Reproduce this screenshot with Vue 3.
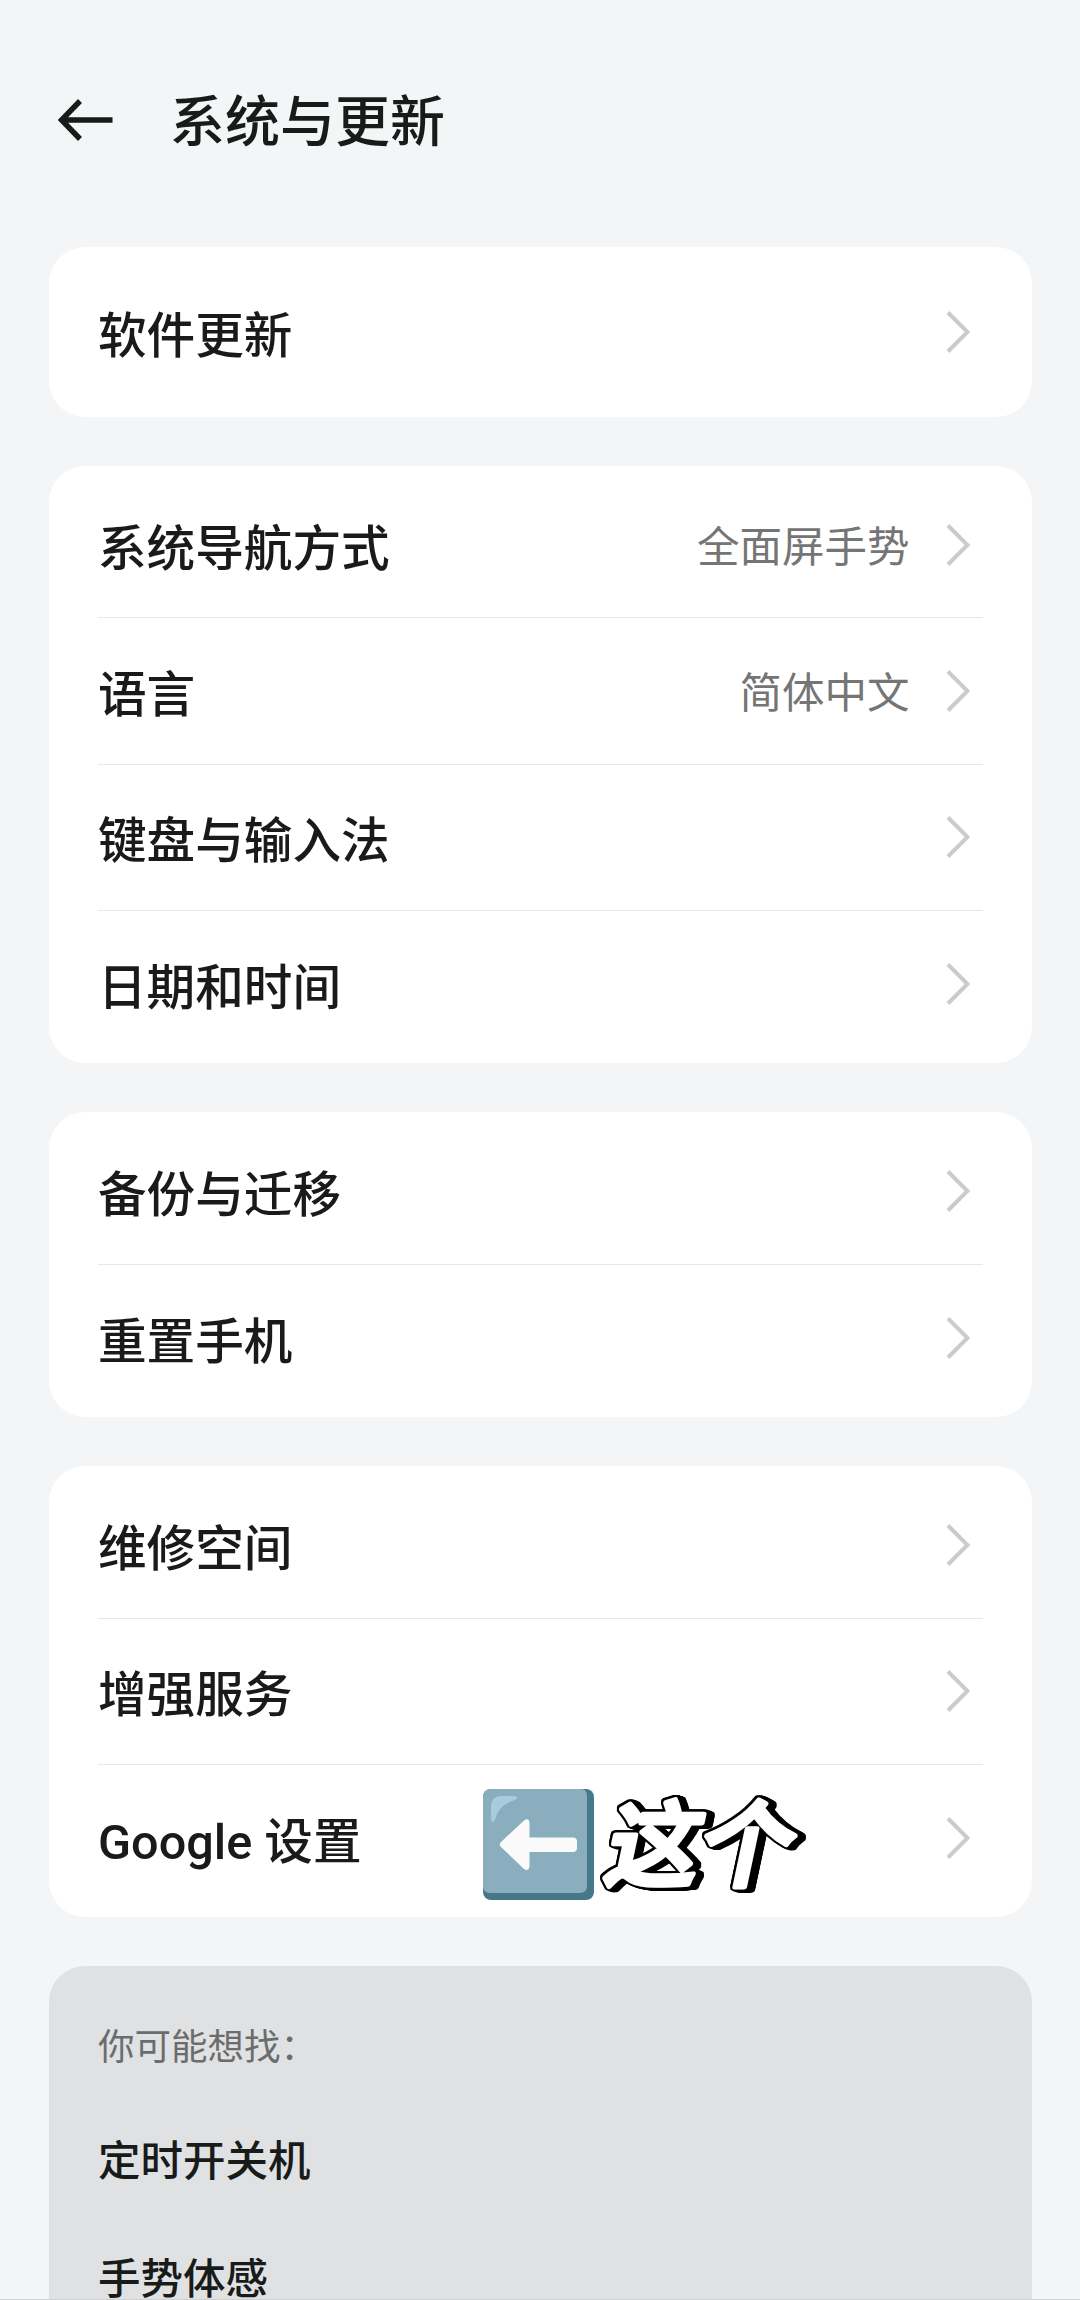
<script setup>
/**
 * 系统与更新 - 设置页
 */

const title = '系统与更新';

/** 设置分组，每组渲染为一张卡片 */
const groups = [
  [{ label: '软件更新' }],
  [
    { label: '系统导航方式', value: '全面屏手势' },
    { label: '语言', value: '简体中文' },
    { label: '键盘与输入法' },
    { label: '日期和时间' }
  ],
  [{ label: '备份与迁移' }, { label: '重置手机' }],
  [
    { label: '维修空间' },
    { label: '增强服务' },
    { label: 'Google 设置', note: '这个' }
  ]
];

const suggestions = ['定时开关机', '手势体感'];
</script>

<template>
  <div class="page">
    <header class="header">
      <svg class="back" width="56" height="44" viewBox="0 0 56 44">
        <path d="M22 3 3.500 22 22 41M4 22H54.500" />
      </svg>
      <h1 class="title">{{ title }}</h1>
    </header>

    <main class="groups">
      <section
        v-for="(group, i) in groups"
        :key="i"
        class="card"
        :class="{ single: group.length === 1 }"
      >
        <div v-for="item in group" :key="item.label" class="row">
          <span class="label">{{ item.label }}</span>
          <span v-if="item.value" class="value">{{ item.value }}</span>
          <svg class="chevron" width="24" height="44" viewBox="0 0 24 44">
            <path d="M2 2.5 21.5 22 2 41.5" />
          </svg>

          <!-- 浮在行上的标注 -->
          <div v-if="item.note" class="note">
            <svg width="111" height="111" viewBox="0 0 111 111">
              <rect width="111" height="111" rx="8" fill="#47788a" />
              <path d="M8 0H98Q104 0 104 7V97Q104 104 97 104H7Q0 104 0 97V8Q0 0 8 0Z" fill="#8aaebe" />
              <path d="M8 30V18Q8 7 19 7H31Q37 8 32 11C20 15 15 20 12 31Q9 36 8 30Z" fill="#a5cddf" />
              <path
                d="M18 53 41 31.500Q46 28 46.500 34V48.500H90Q94 48.500 94 52.500V59Q94 63 90 63H46.500V77Q46 83 41 80L18 58Q15.500 55.500 18 53Z"
                fill="#fafafa"
              />
            </svg>
            <svg class="note-text" width="230" height="111" viewBox="0 0 230 111">
              <text transform="translate(8 90) skewX(-12)">{{ item.note }}</text>
            </svg>
          </div>
        </div>
      </section>

      <section class="suggest">
        <p class="suggest-title">你可能想找：</p>
        <p v-for="s in suggestions" :key="s" class="suggest-item">{{ s }}</p>
      </section>
    </main>
  </div>
</template>

<style>
body {
  margin: 0;
  background: #f3f5f7;
}
</style>

<style scoped>
.page {
  display: flex;
  flex-direction: column;
  box-sizing: border-box;
  width: 1080px;
  height: 2300px;
  overflow: hidden;
  border-bottom: 1px solid #cfd0d0;
  background: #f3f5f7;
  color: #191a1a;
  font-family: Roboto, "Noto Sans CJK SC", sans-serif;
}

/* ======================== 顶栏 ======================== */

.header {
  display: flex;
  flex: none;
  align-items: center;
  gap: 56px;
  box-sizing: border-box;
  height: 240px;
  padding: 0 58px;
}

.back {
  fill: none;
  stroke: #191a1a;
  stroke-width: 5.5px;
}

.title {
  margin: 0;
  padding-top: 3px;
  font-size: 55px;
  font-weight: 500;
  line-height: 80px;
}

/* ======================== 卡片 ======================== */

.groups {
  display: flex;
  flex: 1;
  flex-direction: column;
  gap: 49px;
  padding: 6.500px 48.500px 0 49px;
}

.card {
  flex: none;
  padding: 6px 49px;
  border-radius: 36px;
  background: #fefffe;
}

.card.single {
  padding: 12px 49px;
}

.row {
  position: relative;
  display: flex;
  align-items: center;
  box-sizing: border-box;
  height: 146.400px;
}

.row:not(:last-child) {
  border-bottom: 1px solid #e6e7e7;
}

.label {
  flex: 1;
  padding-top: 10px;
  font-size: 48.600px;
  font-weight: 500;
  line-height: 60px;
}

.value {
  padding-top: 7px;
  margin-right: 36px;
  color: #757575;
  font-size: 42.500px;
  line-height: 60px;
}

.chevron {
  margin-right: 13px;
  fill: none;
  stroke: #cbcbcb;
  stroke-width: 4px;
}

/* ======================== 标注 ======================== */

.note {
  position: absolute;
  top: 24px;
  left: 385px;
  display: flex;
}

/* 前四层阴影为黑色描边，后三层叠出右侧立体厚度 */
.note-text {
  overflow: visible;
  filter:
    drop-shadow(1px 0 0 #000)
    drop-shadow(-2px 0 0 #000)
    drop-shadow(0 1px 0 #000)
    drop-shadow(0 -2px 0 #000)
    drop-shadow(2px 0 0 #000)
    drop-shadow(2px 1px 0 #000)
    drop-shadow(3px 1px 0 #000);
}

.note-text text {
  fill: #fff;
  stroke: #fff;
  stroke-width: 5.500px;
  stroke-linejoin: round;
  font-family: "Noto Sans CJK SC", sans-serif;
  font-size: 93px;
  font-weight: 500;
}

/* ======================== 推荐 ======================== */

.suggest {
  flex: 1;
  padding: 47px 49px 0;
  border-radius: 36px 36px 0 0;
  background: #dfe1e2;
}

.suggest-title {
  margin: 0 0 60px;
  color: #6b6c6d;
  font-size: 36.500px;
  line-height: 70px;
}

.suggest-item {
  margin: 0;
  font-size: 42.500px;
  font-weight: 500;
  line-height: 38px;
}

.suggest-item + .suggest-item {
  margin-top: 80px;
}
</style>
